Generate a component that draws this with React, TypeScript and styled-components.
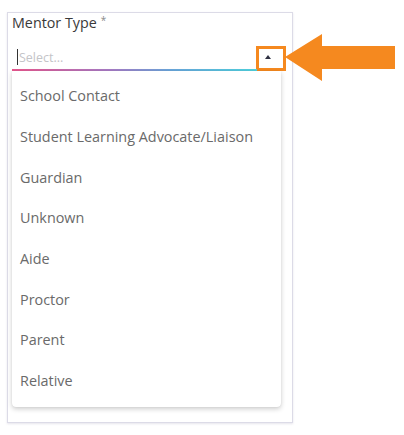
import React from "react";
import styled, { createGlobalStyle } from "styled-components";

const Global = createGlobalStyle`
  html, body { margin: 0; padding: 0; background: #ffffff; }
  body { font-family: "Open Sans", "Noto Sans", sans-serif; }
  * { box-sizing: border-box; }
`;

const Page = styled.div`
  position: relative;
  width: 404px;
  height: 435px;
  padding: 12px 0 0 7px;
`;

const Card = styled.div`
  width: 286px;
  height: 411px;
  border: 1px solid #dcdbe7;
  box-shadow: 0 1px 2px rgba(180, 178, 200, 0.35);
  padding: 1px 11px 0 4px;
  display: flex;
  flex-direction: column;
`;

const Label = styled.div`
  font-size: 14.3px;
  line-height: 18px;
  color: #3a3a3a;
  display: flex;
  align-items: flex-start;
  gap: 4px;
`;

const Star = styled.span`
  font-size: 10px;
  line-height: 12px;
  color: #8a8a8a;
`;

const FieldWrap = styled.div`
  position: relative;
  margin-top: 13px;
`;

const Field = styled.div`
  position: relative;
  height: 26px;
  display: flex;
  align-items: center;
  padding: 0 9px 2px 5px;
  &::after {
    content: "";
    position: absolute;
    left: 0;
    right: 24px;
    bottom: 0;
    height: 2px;
    background: linear-gradient(90deg, #e9588f 0%, #a77bc6 40%, #6aa7dc 65%, #4fd3df 100%);
  }
`;

const Caret = styled.span`
  width: 1px;
  height: 16px;
  background: #333;
  margin-right: 1px;
`;

const Placeholder = styled.span`
  flex: 1;
  font-size: 12.5px;
  color: #c4c4c8;
`;

const Toggle = styled.span`
  width: 0;
  height: 0;
  border-left: 3.5px solid transparent;
  border-right: 3.5px solid transparent;
  border-bottom: 4px solid #2f3142;
  margin-right: 1px;
`;

const Highlight = styled.div`
  position: absolute;
  left: 244px;
  top: 1px;
  width: 30px;
  height: 25px;
  border: 3px solid #f5891f;
`;

const Menu = styled.ul`
  position: absolute;
  left: 0;
  right: 0;
  top: 100%;
  margin: 0;
  padding: 5px 0;
  list-style: none;
  background: #fff;
  border-radius: 0 0 4px 4px;
  box-shadow: 0 2px 5px rgba(0, 0, 0, 0.2), 0 0 1px rgba(0, 0, 0, 0.12);
`;

const Item = styled.li`
  height: 40.7px;
  display: flex;
  align-items: center;
  padding: 0 0 1px 8px;
  font-size: 14.4px;
  color: #6a6a6a;
`;

const BigArrow = styled.svg`
  position: absolute;
  left: 285px;
  top: 34px;
`;

const options = [
  "School Contact",
  "Student Learning Advocate/Liaison",
  "Guardian",
  "Unknown",
  "Aide",
  "Proctor",
  "Parent",
  "Relative",
];

export default function App() {
  return (
    <>
      <Global />
      <Page>
        <Card>
          <Label>
            Mentor Type <Star>*</Star>
          </Label>
          <FieldWrap>
            <Field>
              <Caret />
              <Placeholder>Select...</Placeholder>
              <Toggle />
              <Highlight />
            </Field>
            <Menu>
              {options.map((o) => (
                <Item key={o}>{o}</Item>
              ))}
            </Menu>
          </FieldWrap>
        </Card>
        <BigArrow width="111" height="48" viewBox="0 0 111 48">
          <polygon
            points="0,23 37,0 37,12 110,12 110,35 37,35 37,47"
            fill="#f5891f"
          />
        </BigArrow>
      </Page>
    </>
  );
}
